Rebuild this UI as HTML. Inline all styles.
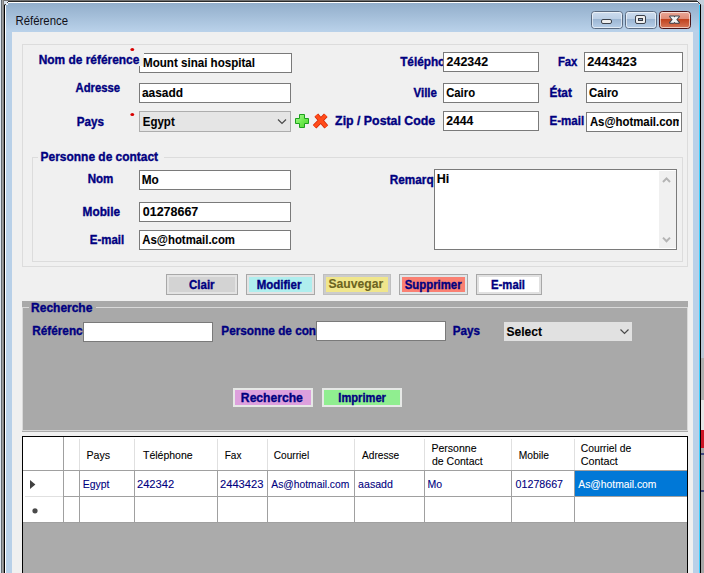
<!DOCTYPE html>
<html><head><meta charset="utf-8"><style>
html,body{margin:0;padding:0;width:704px;height:573px;overflow:hidden;background:#d0dcec}
svg{display:block;font-family:"Liberation Sans",sans-serif}
</style></head><body>
<svg width="704" height="573" viewBox="0 0 704 573" shape-rendering="crispEdges">
<defs><clipPath id='c129'><rect x='587' y='113' width='92' height='18'/></clipPath></defs>
<rect x='0' y='0' width='704' height='573' fill='#d0dcec'/>
<rect x='0' y='0' width='1' height='573' fill='#dfe8f2'/>
<rect x='701' y='0' width='3' height='358' fill='#bcc8d6'/>
<rect x='701' y='358' width='3' height='42' fill='#b0b0b0'/>
<rect x='701' y='400' width='3' height='30' fill='#e6e6e6'/>
<rect x='701' y='430' width='3' height='18' fill='#cc1424'/>
<rect x='701' y='448' width='3' height='125' fill='#a8a8a8'/>
<rect x='701' y='453' width='3' height='2' fill='#404880'/>
<rect x='701' y='490' width='3' height='2' fill='#404880'/>
<rect x='1' y='0' width='696' height='1' fill='#707070'/>
<rect x='7' y='1' width='691' height='1' fill='#2a2a2a'/>
<rect x='8' y='2' width='690' height='1' fill='#ffffff'/>
<rect x='1' y='0' width='1' height='573' fill='#606870'/>
<rect x='2' y='0' width='1' height='573' fill='#a0a0a0'/>
<rect x='3' y='0' width='1' height='573' fill='#808080'/>
<rect x='4' y='5' width='1' height='568' fill='#000000'/>
<rect x='5' y='6' width='1' height='567' fill='#ffffff'/>
<rect x='4' y='1' width='4' height='4' fill='#d8e0ea'/>
<rect x='5' y='4' width='1' height='1' fill='#404040'/>
<rect x='6' y='3' width='1' height='1' fill='#404040'/>
<rect x='4' y='4' width='1' height='1' fill='#808080'/>
<rect x='6' y='4' width='2' height='1' fill='#f0f4f8'/>
<rect x='7' y='2' width='1' height='1' fill='#505050'/>
<rect x='698' y='0' width='6' height='2' fill='#c4d0dc'/>
<rect x='699' y='2' width='5' height='1' fill='#c4d0dc'/>
<rect x='700' y='3' width='4' height='1' fill='#c4d0dc'/>
<rect x='701' y='4' width='3' height='1' fill='#c4d0dc'/>
<rect x='698' y='2' width='1' height='1' fill='#303030'/>
<rect x='699' y='3' width='1' height='1' fill='#404040'/>
<rect x='700' y='4' width='1' height='1' fill='#303030'/>
<rect x='699' y='5' width='1' height='568' fill='#40d0ff'/>
<rect x='700' y='5' width='1' height='568' fill='#000000'/>
<defs><linearGradient id='tg' x1='0' y1='0' x2='0' y2='1'><stop offset='0' stop-color='#92aecb'/><stop offset='1' stop-color='#bad2ea'/></linearGradient><linearGradient id='bt' x1='0' y1='0' x2='0' y2='1'><stop offset='0' stop-color='#cddcee'/><stop offset='0.42' stop-color='#bdd0e6'/><stop offset='0.45' stop-color='#9bb5d2'/><stop offset='1' stop-color='#b9d0ea'/></linearGradient><linearGradient id='ct' x1='0' y1='0' x2='0' y2='1'><stop offset='0' stop-color='#eaa99a'/><stop offset='0.42' stop-color='#e08c78'/><stop offset='0.45' stop-color='#c0401c'/><stop offset='1' stop-color='#d87a5c'/></linearGradient><linearGradient id='pg' x1='0' y1='0' x2='1' y2='1'><stop offset='0' stop-color='#b0f8a0'/><stop offset='0.5' stop-color='#70ec50'/><stop offset='1' stop-color='#50d030'/></linearGradient></defs>
<rect x='6' y='3' width='693' height='29' fill='url(#tg)'/>
<rect x='5' y='6' width='1' height='26' fill='#ffffff'/>
<rect x='6' y='3' width='2' height='2' fill='#e8f0f8'/>
<rect x='6' y='32' width='6' height='541' fill='#b8d0e8'/>
<rect x='693' y='32' width='6' height='541' fill='#b9d0e8'/>
<rect shape-rendering='geometricPrecision' x='591.5' y='11.5' width='31' height='17' rx='3' fill='url(#bt)' stroke='#5a6a80' stroke-width='1'/>
<rect shape-rendering='geometricPrecision' x='592.5' y='12.5' width='29' height='15' rx='2' fill='none' stroke='rgba(255,255,255,0.6)' stroke-width='1'/>
<rect shape-rendering='geometricPrecision' x='625.5' y='11.5' width='31' height='17' rx='3' fill='url(#bt)' stroke='#5a6a80' stroke-width='1'/>
<rect shape-rendering='geometricPrecision' x='626.5' y='12.5' width='29' height='15' rx='2' fill='none' stroke='rgba(255,255,255,0.6)' stroke-width='1'/>
<rect shape-rendering='geometricPrecision' x='659.5' y='11.5' width='31' height='17' rx='3' fill='url(#ct)' stroke='#4a1418' stroke-width='1'/>
<rect shape-rendering='geometricPrecision' x='660.5' y='12.5' width='29' height='15' rx='2' fill='none' stroke='rgba(255,255,255,0.6)' stroke-width='1'/>
<rect shape-rendering='geometricPrecision' x='601.5' y='19.5' width='10' height='4' rx='1.5' fill='#eeeeee' stroke='#3c424c' stroke-width='1'/>
<rect shape-rendering='geometricPrecision' x='635.5' y='15.5' width='10' height='8' rx='1.5' fill='#eeeeee' stroke='#3c424c' stroke-width='1'/>
<rect x='638.5' y='18.5' width='4' height='2' fill='#8aa4c0' stroke='#363a44' stroke-width='1'/>
<path shape-rendering='geometricPrecision' d='M670.1 16.4 L673.7 16.4 L678.9 22.7 L675.3 22.7 Z M675.3 16.4 L678.9 16.4 L673.7 22.7 L670.1 22.7 Z' fill='#3c4450' stroke='#3c4450' stroke-width='2' stroke-linejoin='round'/>
<path shape-rendering='geometricPrecision' d='M670.1 16.4 L673.7 16.4 L678.9 22.7 L675.3 22.7 Z M675.3 16.4 L678.9 16.4 L673.7 22.7 L670.1 22.7 Z' fill='#f4f4f4'/>
<text x='15.55' y='25' font-size='12' font-weight='normal' fill='#101018' textLength='52.50' lengthAdjust='spacingAndGlyphs'>Référence</text>
<rect x='12' y='32' width='681' height='541' fill='#f0f0f0'/>
<rect x='22' y='44' width='666' height='1' fill='#dcdcdc'/>
<rect x='22' y='266' width='666' height='1' fill='#dcdcdc'/>
<rect x='22' y='44' width='1' height='223' fill='#dcdcdc'/>
<rect x='687' y='44' width='1' height='223' fill='#dcdcdc'/>
<rect x='32' y='157' width='651' height='1' fill='#dcdcdc'/>
<rect x='32' y='261' width='651' height='1' fill='#dcdcdc'/>
<rect x='32' y='157' width='1' height='105' fill='#dcdcdc'/>
<rect x='682' y='157' width='1' height='105' fill='#dcdcdc'/>
<rect x='38' y='157' width='126' height='1' fill='#f0f0f0'/>
<rect x='139' y='53' width='153' height='20' fill='#ffffff'/>
<rect x='139' y='53' width='153' height='1' fill='#7a7a7a'/>
<rect x='139' y='72' width='153' height='1' fill='#7a7a7a'/>
<rect x='139' y='53' width='1' height='20' fill='#7a7a7a'/>
<rect x='291' y='53' width='1' height='20' fill='#7a7a7a'/>
<rect x='139' y='83' width='152' height='20' fill='#ffffff'/>
<rect x='139' y='83' width='152' height='1' fill='#7a7a7a'/>
<rect x='139' y='102' width='152' height='1' fill='#7a7a7a'/>
<rect x='139' y='83' width='1' height='20' fill='#7a7a7a'/>
<rect x='290' y='83' width='1' height='20' fill='#7a7a7a'/>
<rect x='139' y='111' width='152' height='21' fill='#e5e5e5'/>
<rect x='139' y='111' width='152' height='1' fill='#adadad'/>
<rect x='139' y='131' width='152' height='1' fill='#adadad'/>
<rect x='139' y='111' width='1' height='21' fill='#adadad'/>
<rect x='290' y='111' width='1' height='21' fill='#adadad'/>
<path shape-rendering='geometricPrecision' d='M278 119.5 L282 123.5 L286 119.5' fill='none' stroke='#4a4a4a' stroke-width='1.2'/>
<rect x='120' y='53' width='24' height='13' fill='#f0f0f0'/>
<text x='38.71' y='64' font-size='12' font-weight='bold' fill='#000080' stroke='#000080' stroke-width='0.35' textLength='100.67' lengthAdjust='spacingAndGlyphs'>Nom de référence</text>
<ellipse shape-rendering='geometricPrecision' cx='132.3' cy='49.5' rx='1.9' ry='1.6' fill='#d80000'/>
<text x='75.50' y='92' font-size='12' font-weight='bold' fill='#000080' stroke='#000080' stroke-width='0.35' textLength='44.55' lengthAdjust='spacingAndGlyphs'>Adresse</text>
<text x='76.73' y='126' font-size='12' font-weight='bold' fill='#000080' stroke='#000080' stroke-width='0.35' textLength='27.30' lengthAdjust='spacingAndGlyphs'>Pays</text>
<ellipse shape-rendering='geometricPrecision' cx='132.3' cy='114.5' rx='1.9' ry='1.6' fill='#d80000'/>
<path shape-rendering='geometricPrecision' d='M299.5 114.5 H304.5 V118.5 H308.5 V123.5 H304.5 V127.5 H299.5 V123.5 H295.5 V118.5 H299.5 Z' fill='url(#pg)' stroke='#1ea01e' stroke-width='1'/>
<path shape-rendering='geometricPrecision' d='M316.3 115.2 L326.3 126.8 M325.8 115.2 L314.6 126.8' stroke='#d42808' stroke-width='5' stroke-linecap='butt'/>
<path shape-rendering='geometricPrecision' d='M316.3 115.2 L326.3 126.8 M325.8 115.2 L314.6 126.8' stroke='#ff4c1a' stroke-width='3.4' stroke-linecap='butt'/>
<text x='400.20' y='66' font-size='12' font-weight='bold' fill='#000080' stroke='#000080' stroke-width='0.35' textLength='58.80' lengthAdjust='spacingAndGlyphs'>Téléphone</text>
<text x='413.50' y='97' font-size='12' font-weight='bold' fill='#000080' stroke='#000080' stroke-width='0.35' textLength='23.45' lengthAdjust='spacingAndGlyphs'>Ville</text>
<text x='335.10' y='125' font-size='12' font-weight='bold' fill='#000080' stroke='#000080' stroke-width='0.35' textLength='100.05' lengthAdjust='spacingAndGlyphs'>Zip / Postal Code</text>
<text x='557.96' y='66' font-size='12' font-weight='bold' fill='#000080' stroke='#000080' stroke-width='0.35' textLength='19.45' lengthAdjust='spacingAndGlyphs'>Fax</text>
<text x='549.51' y='97' font-size='12' font-weight='bold' fill='#000080' stroke='#000080' stroke-width='0.35' textLength='22.36' lengthAdjust='spacingAndGlyphs'>État</text>
<text x='549.54' y='125' font-size='12' font-weight='bold' fill='#000080' stroke='#000080' stroke-width='0.35' textLength='34.64' lengthAdjust='spacingAndGlyphs'>E-mail</text>
<rect x='443' y='52' width='96' height='20' fill='#ffffff'/>
<rect x='443' y='52' width='96' height='1' fill='#7a7a7a'/>
<rect x='443' y='71' width='96' height='1' fill='#7a7a7a'/>
<rect x='443' y='52' width='1' height='20' fill='#7a7a7a'/>
<rect x='538' y='52' width='1' height='20' fill='#7a7a7a'/>
<rect x='443' y='83' width='96' height='20' fill='#ffffff'/>
<rect x='443' y='83' width='96' height='1' fill='#7a7a7a'/>
<rect x='443' y='102' width='96' height='1' fill='#7a7a7a'/>
<rect x='443' y='83' width='1' height='20' fill='#7a7a7a'/>
<rect x='538' y='83' width='1' height='20' fill='#7a7a7a'/>
<rect x='443' y='111' width='96' height='20' fill='#ffffff'/>
<rect x='443' y='111' width='96' height='1' fill='#7a7a7a'/>
<rect x='443' y='130' width='96' height='1' fill='#7a7a7a'/>
<rect x='443' y='111' width='1' height='20' fill='#7a7a7a'/>
<rect x='538' y='111' width='1' height='20' fill='#7a7a7a'/>
<rect x='584' y='52' width='99' height='20' fill='#ffffff'/>
<rect x='584' y='52' width='99' height='1' fill='#7a7a7a'/>
<rect x='584' y='71' width='99' height='1' fill='#7a7a7a'/>
<rect x='584' y='52' width='1' height='20' fill='#7a7a7a'/>
<rect x='682' y='52' width='1' height='20' fill='#7a7a7a'/>
<rect x='586' y='83' width='96' height='20' fill='#ffffff'/>
<rect x='586' y='83' width='96' height='1' fill='#7a7a7a'/>
<rect x='586' y='102' width='96' height='1' fill='#7a7a7a'/>
<rect x='586' y='83' width='1' height='20' fill='#7a7a7a'/>
<rect x='681' y='83' width='1' height='20' fill='#7a7a7a'/>
<rect x='586' y='112' width='96' height='20' fill='#ffffff'/>
<rect x='586' y='112' width='96' height='1' fill='#7a7a7a'/>
<rect x='586' y='131' width='96' height='1' fill='#7a7a7a'/>
<rect x='586' y='112' width='1' height='20' fill='#7a7a7a'/>
<rect x='681' y='112' width='1' height='20' fill='#7a7a7a'/>
<text x='143.04' y='67' font-size='12' font-weight='bold' fill='#000000' stroke='#000000' stroke-width='0.1' textLength='111.93' lengthAdjust='spacingAndGlyphs'>Mount sinai hospital</text>
<text x='141.90' y='97' font-size='12' font-weight='bold' fill='#000000' stroke='#000000' stroke-width='0.1' textLength='41.06' lengthAdjust='spacingAndGlyphs'>aasadd</text>
<text x='142.84' y='126' font-size='12' font-weight='bold' fill='#000000' stroke='#000000' stroke-width='0.1' textLength='31.88' lengthAdjust='spacingAndGlyphs'>Egypt</text>
<text x='446.60' y='66' font-size='12' font-weight='bold' fill='#000000' stroke='#000000' stroke-width='0.1' textLength='41.45' lengthAdjust='spacingAndGlyphs'>242342</text>
<text x='446.20' y='97' font-size='12' font-weight='bold' fill='#000000' stroke='#000000' stroke-width='0.1' textLength='28.85' lengthAdjust='spacingAndGlyphs'>Cairo</text>
<text x='446.20' y='125' font-size='12' font-weight='bold' fill='#000000' stroke='#000000' stroke-width='0.1' textLength='27.20' lengthAdjust='spacingAndGlyphs'>2444</text>
<text x='587.20' y='66' font-size='12' font-weight='bold' fill='#000000' stroke='#000000' stroke-width='0.1' textLength='49.56' lengthAdjust='spacingAndGlyphs'>2443423</text>
<text x='589.10' y='97' font-size='12' font-weight='bold' fill='#000000' stroke='#000000' stroke-width='0.1' textLength='29.26' lengthAdjust='spacingAndGlyphs'>Cairo</text>
<text x='589.90' y='126' font-size='12' font-weight='bold' fill='#000000' stroke='#000000' stroke-width='0.1' textLength='92.68' lengthAdjust='spacingAndGlyphs' clip-path='url(#c129)'>As@hotmail.com</text>
<text x='40.61' y='161' font-size='12' font-weight='bold' fill='#000080' stroke='#000080' stroke-width='0.35' textLength='117.43' lengthAdjust='spacingAndGlyphs'>Personne de contact</text>
<text x='87.64' y='183' font-size='12' font-weight='bold' fill='#000080' stroke='#000080' stroke-width='0.35' textLength='25.71' lengthAdjust='spacingAndGlyphs'>Nom</text>
<text x='82.62' y='216' font-size='12' font-weight='bold' fill='#000080' stroke='#000080' stroke-width='0.35' textLength='37.38' lengthAdjust='spacingAndGlyphs'>Mobile</text>
<text x='89.85' y='244' font-size='12' font-weight='bold' fill='#000080' stroke='#000080' stroke-width='0.35' textLength='34.32' lengthAdjust='spacingAndGlyphs'>E-mail</text>
<rect x='139' y='170' width='152' height='20' fill='#ffffff'/>
<rect x='139' y='170' width='152' height='1' fill='#7a7a7a'/>
<rect x='139' y='189' width='152' height='1' fill='#7a7a7a'/>
<rect x='139' y='170' width='1' height='20' fill='#7a7a7a'/>
<rect x='290' y='170' width='1' height='20' fill='#7a7a7a'/>
<rect x='139' y='202' width='152' height='20' fill='#ffffff'/>
<rect x='139' y='202' width='152' height='1' fill='#7a7a7a'/>
<rect x='139' y='221' width='152' height='1' fill='#7a7a7a'/>
<rect x='139' y='202' width='1' height='20' fill='#7a7a7a'/>
<rect x='290' y='202' width='1' height='20' fill='#7a7a7a'/>
<rect x='139' y='230' width='152' height='20' fill='#ffffff'/>
<rect x='139' y='230' width='152' height='1' fill='#7a7a7a'/>
<rect x='139' y='249' width='152' height='1' fill='#7a7a7a'/>
<rect x='139' y='230' width='1' height='20' fill='#7a7a7a'/>
<rect x='290' y='230' width='1' height='20' fill='#7a7a7a'/>
<text x='141.82' y='184' font-size='12' font-weight='bold' fill='#000000' stroke='#000000' stroke-width='0.1' textLength='17.00' lengthAdjust='spacingAndGlyphs'>Mo</text>
<text x='142.80' y='216' font-size='12' font-weight='bold' fill='#000000' stroke='#000000' stroke-width='0.1' textLength='55.51' lengthAdjust='spacingAndGlyphs'>01278667</text>
<text x='142.30' y='244' font-size='12' font-weight='bold' fill='#000000' stroke='#000000' stroke-width='0.1' textLength='92.68' lengthAdjust='spacingAndGlyphs'>As@hotmail.com</text>
<text x='389.82' y='184' font-size='12' font-weight='bold' fill='#000080' stroke='#000080' stroke-width='0.35' textLength='57.50' lengthAdjust='spacingAndGlyphs'>Remarque</text>
<rect x='434' y='169' width='243' height='81' fill='#ffffff'/>
<rect x='434' y='169' width='243' height='1' fill='#7a7a7a'/>
<rect x='434' y='249' width='243' height='1' fill='#7a7a7a'/>
<rect x='434' y='169' width='1' height='81' fill='#7a7a7a'/>
<rect x='676' y='169' width='1' height='81' fill='#7a7a7a'/>
<rect x='659' y='171' width='17' height='77' fill='#f0f0f0'/>
<path shape-rendering='geometricPrecision' d='M663 182 L666.5 178.4 L670 182' fill='none' stroke='#b4b4b4' stroke-width='2'/>
<path shape-rendering='geometricPrecision' d='M663 237.6 L666.5 241.2 L670 237.6' fill='none' stroke='#b4b4b4' stroke-width='2'/>
<text x='436.70' y='183' font-size='12' font-weight='bold' fill='#000000' stroke='#000000' stroke-width='0.1' textLength='12.54' lengthAdjust='spacingAndGlyphs'>Hi</text>
<rect x='166' y='274' width='72' height='21' fill='#e3e3e3'/>
<rect x='166' y='274' width='72' height='1' fill='#a8a8a8'/>
<rect x='166' y='294' width='72' height='1' fill='#a8a8a8'/>
<rect x='166' y='274' width='1' height='21' fill='#a8a8a8'/>
<rect x='237' y='274' width='1' height='21' fill='#a8a8a8'/>
<rect x='169' y='277' width='66' height='15' fill='#d3d3d3'/>
<rect x='246' y='274' width='69' height='21' fill='#e3e3e3'/>
<rect x='246' y='274' width='69' height='1' fill='#a8a8a8'/>
<rect x='246' y='294' width='69' height='1' fill='#a8a8a8'/>
<rect x='246' y='274' width='1' height='21' fill='#a8a8a8'/>
<rect x='314' y='274' width='1' height='21' fill='#a8a8a8'/>
<rect x='249' y='277' width='63' height='15' fill='#afeeee'/>
<rect x='323' y='274' width='68' height='21' fill='#cccccc'/>
<rect x='323' y='274' width='68' height='1' fill='#bfbfbf'/>
<rect x='323' y='294' width='68' height='1' fill='#bfbfbf'/>
<rect x='323' y='274' width='1' height='21' fill='#bfbfbf'/>
<rect x='390' y='274' width='1' height='21' fill='#bfbfbf'/>
<rect x='326' y='277' width='62' height='15' fill='#f0e68c'/>
<rect x='399' y='274' width='69' height='21' fill='#e1e6e8'/>
<rect x='399' y='274' width='69' height='1' fill='#a8a8a8'/>
<rect x='399' y='294' width='69' height='1' fill='#a8a8a8'/>
<rect x='399' y='274' width='1' height='21' fill='#a8a8a8'/>
<rect x='467' y='274' width='1' height='21' fill='#a8a8a8'/>
<rect x='402' y='277' width='63' height='15' fill='#fa8072'/>
<rect x='476' y='274' width='66' height='21' fill='#e1e1e1'/>
<rect x='476' y='274' width='66' height='1' fill='#a8a8a8'/>
<rect x='476' y='294' width='66' height='1' fill='#a8a8a8'/>
<rect x='476' y='274' width='1' height='21' fill='#a8a8a8'/>
<rect x='541' y='274' width='1' height='21' fill='#a8a8a8'/>
<rect x='479' y='277' width='60' height='15' fill='#ffffff'/>
<text x='189.00' y='289' font-size='12' font-weight='bold' fill='#000080' stroke='#000080' stroke-width='0.35' textLength='25.60' lengthAdjust='spacingAndGlyphs'>Clair</text>
<text x='256.74' y='289' font-size='12' font-weight='bold' fill='#000080' stroke='#000080' stroke-width='0.35' textLength='44.64' lengthAdjust='spacingAndGlyphs'>Modifier</text>
<text x='328.49' y='288' font-size='12' font-weight='bold' fill='#6c6420' stroke='#6c6420' stroke-width='0.1' textLength='54.64' lengthAdjust='spacingAndGlyphs'>Sauvegar</text>
<text x='404.75' y='289' font-size='12' font-weight='bold' fill='#000080' stroke='#000080' stroke-width='0.35' textLength='56.86' lengthAdjust='spacingAndGlyphs'>Supprimer</text>
<text x='491.06' y='289' font-size='12' font-weight='bold' fill='#000080' stroke='#000080' stroke-width='0.35' textLength='33.90' lengthAdjust='spacingAndGlyphs'>E-mail</text>
<rect x='22' y='301' width='666' height='131' fill='#a9a9a9'/>
<rect x='22' y='307' width='7' height='1' fill='#d9d9d9'/>
<rect x='96' y='307' width='592' height='1' fill='#d9d9d9'/>
<rect x='22' y='307' width='1' height='124' fill='#d9d9d9'/>
<rect x='687' y='307' width='1' height='124' fill='#d9d9d9'/>
<rect x='22' y='430' width='666' height='1' fill='#d9d9d9'/>
<text x='31.10' y='312' font-size='12' font-weight='bold' fill='#000080' stroke='#000080' stroke-width='0.35' textLength='61.27' lengthAdjust='spacingAndGlyphs'>Recherche</text>
<text x='32.32' y='335' font-size='12' font-weight='bold' fill='#000080' stroke='#000080' stroke-width='0.35' textLength='56.85' lengthAdjust='spacingAndGlyphs'>Référence</text>
<text x='221.32' y='335' font-size='12' font-weight='bold' fill='#000080' stroke='#000080' stroke-width='0.35' textLength='115.64' lengthAdjust='spacingAndGlyphs'>Personne de contact</text>
<text x='452.78' y='335' font-size='12' font-weight='bold' fill='#000080' stroke='#000080' stroke-width='0.35' textLength='27.25' lengthAdjust='spacingAndGlyphs'>Pays</text>
<rect x='83' y='322' width='130' height='20' fill='#ffffff'/>
<rect x='83' y='322' width='130' height='1' fill='#7a7a7a'/>
<rect x='83' y='341' width='130' height='1' fill='#7a7a7a'/>
<rect x='83' y='322' width='1' height='20' fill='#7a7a7a'/>
<rect x='212' y='322' width='1' height='20' fill='#7a7a7a'/>
<rect x='316' y='321' width='130' height='20' fill='#ffffff'/>
<rect x='316' y='321' width='130' height='1' fill='#7a7a7a'/>
<rect x='316' y='340' width='130' height='1' fill='#7a7a7a'/>
<rect x='316' y='321' width='1' height='20' fill='#7a7a7a'/>
<rect x='445' y='321' width='1' height='20' fill='#7a7a7a'/>
<rect x='504' y='322' width='128' height='19' fill='#e1e1e1'/>
<path shape-rendering='geometricPrecision' d='M620.5 329.5 L624.5 333.5 L628.5 329.5' fill='none' stroke='#4a4a4a' stroke-width='1.2'/>
<text x='506.49' y='336' font-size='12' font-weight='bold' fill='#000000' stroke='#000000' stroke-width='0.1' textLength='35.57' lengthAdjust='spacingAndGlyphs'>Select</text>
<rect x='233' y='388' width='80' height='19' fill='#e6e8e6'/>
<rect x='235' y='390' width='76' height='15' fill='#dda0dd'/>
<rect x='322' y='388' width='80' height='19' fill='#e6e8e6'/>
<rect x='324' y='390' width='76' height='15' fill='#90ee90'/>
<text x='240.89' y='402' font-size='12' font-weight='bold' fill='#000080' stroke='#000080' stroke-width='0.35' textLength='61.99' lengthAdjust='spacingAndGlyphs'>Recherche</text>
<text x='338.37' y='402' font-size='12' font-weight='bold' fill='#000080' stroke='#000080' stroke-width='0.35' textLength='47.56' lengthAdjust='spacingAndGlyphs'>Imprimer</text>
<rect x='22' y='436' width='666' height='137' fill='#000000'/>
<rect x='23' y='437' width='664' height='136' fill='#ababab'/>
<rect x='23' y='437' width='664' height='85' fill='#ffffff'/>
<rect x='23' y='470' width='664' height='1' fill='#a0a0a0'/>
<rect x='64' y='496' width='623' height='1' fill='#a0a0a0'/>
<rect x='25' y='496' width='38' height='1' fill='#e0e0e0'/>
<rect x='23' y='522' width='664' height='1' fill='#a0a0a0'/>
<rect x='63' y='437' width='1' height='86' fill='#a0a0a0'/>
<rect x='79' y='439' width='1' height='31' fill='#e0e0e0'/>
<rect x='79' y='471' width='1' height='52' fill='#a0a0a0'/>
<rect x='134' y='439' width='1' height='31' fill='#e0e0e0'/>
<rect x='134' y='471' width='1' height='52' fill='#a0a0a0'/>
<rect x='217' y='439' width='1' height='31' fill='#e0e0e0'/>
<rect x='217' y='471' width='1' height='52' fill='#a0a0a0'/>
<rect x='267' y='439' width='1' height='31' fill='#e0e0e0'/>
<rect x='267' y='471' width='1' height='52' fill='#a0a0a0'/>
<rect x='354' y='439' width='1' height='31' fill='#e0e0e0'/>
<rect x='354' y='471' width='1' height='52' fill='#a0a0a0'/>
<rect x='424' y='439' width='1' height='31' fill='#e0e0e0'/>
<rect x='424' y='471' width='1' height='52' fill='#a0a0a0'/>
<rect x='511' y='439' width='1' height='31' fill='#e0e0e0'/>
<rect x='511' y='471' width='1' height='52' fill='#a0a0a0'/>
<rect x='574' y='439' width='1' height='31' fill='#e0e0e0'/>
<rect x='574' y='471' width='1' height='52' fill='#a0a0a0'/>
<rect x='575' y='471' width='112' height='25' fill='#0078d7'/>
<path shape-rendering='geometricPrecision' d='M30 480 L35.4 484.5 L30 489 Z' fill='#404040'/>
<circle shape-rendering='geometricPrecision' cx='35' cy='510.8' r='2.6' fill='#4a4a4a'/>
<text x='86.38' y='459' font-size='11.5' font-weight='normal' fill='#000000' stroke='#000000' stroke-width='0.1' textLength='23.66' lengthAdjust='spacingAndGlyphs'>Pays</text>
<text x='143.00' y='459' font-size='11.5' font-weight='normal' fill='#000000' stroke='#000000' stroke-width='0.1' textLength='49.63' lengthAdjust='spacingAndGlyphs'>Téléphone</text>
<text x='224.73' y='459' font-size='11.5' font-weight='normal' fill='#000000' stroke='#000000' stroke-width='0.1' textLength='16.72' lengthAdjust='spacingAndGlyphs'>Fax</text>
<text x='273.82' y='459' font-size='11.5' font-weight='normal' fill='#000000' stroke='#000000' stroke-width='0.1' textLength='35.41' lengthAdjust='spacingAndGlyphs'>Courriel</text>
<text x='362.00' y='459' font-size='11.5' font-weight='normal' fill='#000000' stroke='#000000' stroke-width='0.1' textLength='37.17' lengthAdjust='spacingAndGlyphs'>Adresse</text>
<text x='431.49' y='452' font-size='11.5' font-weight='normal' fill='#000000' stroke='#000000' stroke-width='0.1' textLength='45.03' lengthAdjust='spacingAndGlyphs'>Personne</text>
<text x='432.00' y='465' font-size='11.5' font-weight='normal' fill='#000000' stroke='#000000' stroke-width='0.1' textLength='50.76' lengthAdjust='spacingAndGlyphs'>de Contact</text>
<text x='518.81' y='459' font-size='11.5' font-weight='normal' fill='#000000' stroke='#000000' stroke-width='0.1' textLength='30.19' lengthAdjust='spacingAndGlyphs'>Mobile</text>
<text x='580.70' y='452' font-size='11.5' font-weight='normal' fill='#000000' stroke='#000000' stroke-width='0.1' textLength='50.52' lengthAdjust='spacingAndGlyphs'>Courriel de</text>
<text x='580.66' y='465' font-size='11.5' font-weight='normal' fill='#000000' stroke='#000000' stroke-width='0.1' textLength='37.20' lengthAdjust='spacingAndGlyphs'>Contact</text>
<text x='82.79' y='488' font-size='11.5' font-weight='normal' fill='#000080' stroke='#000080' stroke-width='0.1' textLength='26.69' lengthAdjust='spacingAndGlyphs'>Egypt</text>
<text x='136.93' y='488' font-size='11.5' font-weight='normal' fill='#000080' stroke='#000080' stroke-width='0.1' textLength='37.23' lengthAdjust='spacingAndGlyphs'>242342</text>
<text x='220.03' y='488' font-size='11.5' font-weight='normal' fill='#000080' stroke='#000080' stroke-width='0.1' textLength='43.43' lengthAdjust='spacingAndGlyphs'>2443423</text>
<text x='271.30' y='488' font-size='11.5' font-weight='normal' fill='#000080' stroke='#000080' stroke-width='0.1' textLength='77.98' lengthAdjust='spacingAndGlyphs'>As@hotmail.com</text>
<text x='358.10' y='488' font-size='11.5' font-weight='normal' fill='#000080' stroke='#000080' stroke-width='0.1' textLength='34.78' lengthAdjust='spacingAndGlyphs'>aasadd</text>
<text x='427.59' y='488' font-size='11.5' font-weight='normal' fill='#000080' stroke='#000080' stroke-width='0.1' textLength='14.60' lengthAdjust='spacingAndGlyphs'>Mo</text>
<text x='515.60' y='488' font-size='11.5' font-weight='normal' fill='#000080' stroke='#000080' stroke-width='0.1' textLength='47.46' lengthAdjust='spacingAndGlyphs'>01278667</text>
<text x='578.30' y='488' font-size='11.5' font-weight='normal' fill='#ffffff' stroke='#ffffff' stroke-width='0.1' textLength='78.08' lengthAdjust='spacingAndGlyphs'>As@hotmail.com</text>
</svg></body></html>
